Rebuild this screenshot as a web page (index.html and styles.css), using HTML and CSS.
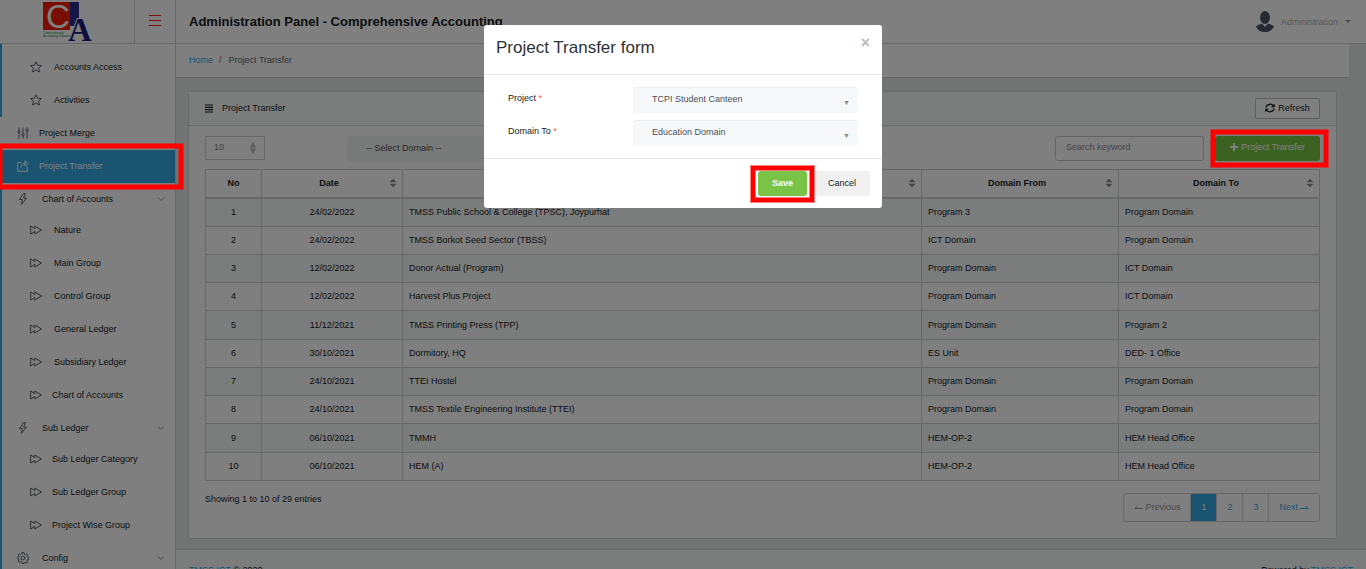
FILE: index.html
```html
<!DOCTYPE html>
<html lang="en">
<head>
<meta charset="utf-8">
<title>Project Transfer</title>
<link rel="stylesheet" href="styles.css">
</head>
<body>
<svg class="sprite" aria-hidden="true">
  <symbol id="star" viewBox="0 0 12 12"><path d="M6 .7l1.600 3.500 3.800.4-2.800 2.600.8 3.800L6 9.100 2.600 11l.8-3.800L.6 4.600l3.800-.4z"/></symbol>
  <symbol id="sliders" viewBox="0 0 12 12"><path d="M2 .5v3M2 6v5.500M6 .5v6M6 9v2.500M10 .5v1.500M10 5v6.500"/><circle cx="2" cy="4.800" r="1.200"/><circle cx="6" cy="7.800" r="1.200"/><circle cx="10" cy="3.300" r="1.200"/></symbol>
  <symbol id="share" viewBox="0 0 12 12"><path d="M4.500 2.500H.7v8.800h9.600V6.500M4 8c0-3 1.500-4.500 4.500-4.500M8 .8l3.300 2.700L8 6.200z"/></symbol>
  <symbol id="bolt" viewBox="0 0 12 12"><path d="M6.500.6L2.500 6.500h2.800L4.500 11.400l5-6.300H6.600L8.300.6z"/></symbol>
  <symbol id="forward" viewBox="0 0 12 12"><path d="M.6 2v8L4.800 7.500V10L11.500 6 4.800 2v2.500z"/></symbol>
  <symbol id="gear" viewBox="0 0 12 12"><path d="M5 .6h2l.3 1.500 1 .4 1.300-.8 1.300 1.400-.8 1.200.4 1 1 .3v1.800l-1.100.3-.4 1 .8 1.200-1.300 1.400-1.300-.8-.9.400L7 11.400H5l-.3-1.500-1-.4-1.300.8L1.100 8.900l.8-1.200-.4-1L.5 6.400V5.300l1.100-.3.4-1-.9-1.200 1.300-1.200 1.300.7 1-.3z"/><circle cx="6" cy="6" r="1.900"/></symbol>
  <symbol id="chevron" viewBox="0 0 8 8"><path d="M1 2.500l3 3 3-3"/></symbol>
  <symbol id="sort" viewBox="0 0 8 10"><path d="M.5 4.300L4 .8l3.500 3.500zM.5 5.700L4 9.200l3.500-3.500z"/></symbol>
</svg>

<header class="topbar">
  <a class="brand" href="#" aria-label="Comprehensive Accounting Software">
    <svg width="50" height="42" viewBox="0 0 50 42">
      <rect x="1" y="2" width="27" height="28" fill="#f01d08"/>
      <rect x="28" y="2" width="9" height="24" fill="#2a2a8c"/>
      <text x="4" y="28" class="logo-c">C</text>
      <text x="26" y="41" class="logo-a">A</text>
      <text x="1" y="34" class="logo-tag">Comprehensive</text>
      <text x="1" y="37" class="logo-tag">Accounting Software</text>
    </svg>
  </a>
  <button class="burger" aria-label="Toggle menu"><span></span><span></span><span></span></button>
  <h1 class="app-title">Administration Panel - Comprehensive Accounting</h1>
  <button class="account">
    <svg width="18" height="21" viewBox="0 0 18 21"><ellipse cx="9" cy="6.500" rx="5" ry="6.500"/><path d="M0 15.500c1.500-1.800 4-2 6-3l3 3.500 3-3.500c2 1 4.500 1.200 6 3-1.500 3.700-5 5.500-9 5.500s-7.500-1.800-9-5.500z"/></svg>
    Administration <span class="caret"></span>
  </button>
</header>

<div class="shell">
  <nav class="sidebar">
    <div class="group group-first">
      <a class="item sub wide" href="#"><svg class="ico"><use href="#star"/></svg>Accounts Access</a>
      <a class="item sub wide" href="#"><svg class="ico"><use href="#star"/></svg>Activities</a>
    </div>
    <a class="item top" href="#"><svg class="ico"><use href="#sliders"/></svg>Project Merge</a>
    <a class="item top active marked" href="#"><svg class="ico"><use href="#share"/></svg>Project Transfer</a>
    <div class="group">
      <a class="item head" href="#"><svg class="ico"><use href="#bolt"/></svg>Chart of Accounts<svg class="chev"><use href="#chevron"/></svg></a>
      <a class="item sub wide" href="#"><svg class="ico"><use href="#forward"/></svg>Nature</a>
      <a class="item sub wide" href="#"><svg class="ico"><use href="#forward"/></svg>Main Group</a>
      <a class="item sub wide" href="#"><svg class="ico"><use href="#forward"/></svg>Control Group</a>
      <a class="item sub wide" href="#"><svg class="ico"><use href="#forward"/></svg>General Ledger</a>
      <a class="item sub wide" href="#"><svg class="ico"><use href="#forward"/></svg>Subsidiary Ledger</a>
      <a class="item sub" href="#"><svg class="ico"><use href="#forward"/></svg>Chart of Accounts</a>
      <a class="item head" href="#"><svg class="ico"><use href="#bolt"/></svg>Sub Ledger<svg class="chev"><use href="#chevron"/></svg></a>
      <a class="item sub" href="#"><svg class="ico"><use href="#forward"/></svg>Sub Ledger Category</a>
      <a class="item sub" href="#"><svg class="ico"><use href="#forward"/></svg>Sub Ledger Group</a>
      <a class="item sub" href="#"><svg class="ico"><use href="#forward"/></svg>Project Wise Group</a>
      <a class="item head" href="#"><svg class="ico"><use href="#gear"/></svg>Config<svg class="chev"><use href="#chevron"/></svg></a>
    </div>
  </nav>

  <main class="main">
    <div class="crumbs"><a href="#">Home</a><span class="slash">/</span><span>Project Transfer</span></div>
    <section class="card">
      <div class="card-head">
        <svg width="8" height="9" viewBox="0 0 8 9"><path d="M0 1h8M0 3.300h8M0 5.700h8M0 8h8" stroke="#151b1e" stroke-width="1.200"/></svg>
        <span>Project Transfer</span>
        <button class="refresh"><svg width="10" height="10" viewBox="0 0 10 10"><path d="M1 4.500C1.500 1 6.500 0 8.500 3M9 5.500C8.500 9 3.500 10 1.500 7" fill="none" stroke="#151b1e" stroke-width="1.300"/><path d="M9.800.5v3.700H6.100zM.2 9.500V5.800h3.700z" fill="#151b1e"/></svg>Refresh</button>
      </div>
      <div class="card-body">
        <div class="tools">
          <div class="length">
            <select aria-label="Rows per page"><option>10</option></select>
            <svg width="6" height="12" viewBox="0 0 6 12"><path d="M0 5.500L3 0l3 5.500zM0 6.500L3 12l3-5.500z"/></svg>
          </div>
          <select class="soft domain" aria-label="Domain"><option>-- Select Domain --</option></select>
          <input class="search" type="text" placeholder="Search keyword" aria-label="Search keyword">
          <button class="btn green add marked"><svg width="8" height="8" viewBox="0 0 8 8"><path d="M4 0v8M0 4h8" stroke="#fff" stroke-width="2"/></svg>Project Transfer</button>
        </div>
        <table class="grid">
          <colgroup><col class="c-no"><col class="c-date"><col><col class="c-from"><col class="c-to"></colgroup>
          <thead><tr>
            <th>No</th>
            <th class="sortable">Date<svg class="sort"><use href="#sort"/></svg></th>
            <th class="sortable">Project<svg class="sort"><use href="#sort"/></svg></th>
            <th class="sortable">Domain From<svg class="sort"><use href="#sort"/></svg></th>
            <th class="sortable">Domain To<svg class="sort"><use href="#sort"/></svg></th>
          </tr></thead>
          <tbody>
            <tr><td>1</td><td>24/02/2022</td><td>TMSS Public School &amp; College (TPSC), Joypurhat</td><td>Program 3</td><td>Program Domain</td></tr>
            <tr><td>2</td><td>24/02/2022</td><td>TMSS Borkot Seed Sector (TBSS)</td><td>ICT Domain</td><td>Program Domain</td></tr>
            <tr><td>3</td><td>12/02/2022</td><td>Donor Actual (Program)</td><td>Program Domain</td><td>ICT Domain</td></tr>
            <tr><td>4</td><td>12/02/2022</td><td>Harvest Plus Project</td><td>Program Domain</td><td>ICT Domain</td></tr>
            <tr><td>5</td><td>11/12/2021</td><td>TMSS Printing Press (TPP)</td><td>Program Domain</td><td>Program 2</td></tr>
            <tr><td>6</td><td>30/10/2021</td><td>Dormitory, HQ</td><td>ES Unit</td><td>DED- 1 Office</td></tr>
            <tr><td>7</td><td>24/10/2021</td><td>TTEI Hostel</td><td>Program Domain</td><td>Program Domain</td></tr>
            <tr><td>8</td><td>24/10/2021</td><td>TMSS Textile Engineering Institute (TTEI)</td><td>Program Domain</td><td>Program Domain</td></tr>
            <tr><td>9</td><td>06/10/2021</td><td>TMMH</td><td>HEM-OP-2</td><td>HEM Head Office</td></tr>
            <tr><td>10</td><td>06/10/2021</td><td>HEM (A)</td><td>HEM-OP-2</td><td>HEM Head Office</td></tr>
          </tbody>
        </table>
        <div class="table-foot">
          <span>Showing 1 to 10 of 29 entries</span>
          <nav class="pages" aria-label="Pages">
            <a class="off" href="#"><svg width="9" height="6" viewBox="0 0 9 6"><path d="M9 4.500H1L3.500 2"/></svg>Previous</a><a class="on" href="#">1</a><a href="#">2</a><a href="#">3</a><a href="#">Next<svg width="9" height="6" viewBox="0 0 9 6"><path d="M0 4.500h8L5.500 2"/></svg></a>
          </nav>
        </div>
      </div>
    </section>
    <footer class="footer"><span><a href="#">TMSS ICT</a> © 2020</span><span>Powered by <a href="#">TMSS ICT</a></span></footer>
  </main>
</div>

<div class="backdrop">
  <form class="modal" role="dialog" aria-labelledby="modal-title">
    <div class="modal-head">
      <h2 id="modal-title">Project Transfer form</h2>
      <button type="button" class="close" aria-label="Close">×</button>
    </div>
    <div class="modal-body">
      <label for="project">Project <b>*</b></label>
      <div class="pick"><select class="soft" id="project"><option>TCPI Student Canteen</option></select><span>▼</span></div>
      <label for="domain">Domain To <b>*</b></label>
      <div class="pick"><select class="soft" id="domain"><option>Education Domain</option></select><span>▼</span></div>
    </div>
    <div class="modal-foot">
      <button type="button" class="btn green save marked">Save</button>
      <button type="button" class="btn cancel">Cancel</button>
    </div>
  </form>
</div>
</body>
</html>
```

FILE: styles.css
```css
* { box-sizing: border-box; }
body {
  margin: 0;
  height: 100vh;
  overflow: hidden;
  background: #e4e8e6;
  color: #151b1e;
  font: 9px/14px "Liberation Sans", Arial, sans-serif;
}
a { color: #36a9e1; text-decoration: none; }
button, select, input { font: inherit; color: inherit; margin: 0; }
select { appearance: none; }
.sprite { position: absolute; width: 0; height: 0; }

/* top bar */
.topbar {
  display: flex;
  align-items: center;
  height: 44px;
  background: #fff;
  border-bottom: 1px solid #cfd3d2;
}
.brand { display: flex; justify-content: center; width: 134px; height: 43px; }
.brand svg { overflow: visible; }
.logo-c { font: 33px "Liberation Sans", Arial, sans-serif; fill: #fff; }
.logo-a { font: bold 33px "Liberation Serif", serif; fill: #1b1b80; stroke: #fff; stroke-width: 2px; paint-order: stroke; }
.logo-tag { font: 3px "Liberation Sans", Arial, sans-serif; fill: #178a3a; }
.burger {
  display: flex;
  flex-direction: column;
  justify-content: center;
  align-items: center;
  gap: 4px;
  width: 42px;
  height: 43px;
  padding: 0 0 2px;
  background: none;
  border: solid #cfd3d2;
  border-width: 0 1px;
}
.burger span { width: 12px; height: 1px; background: #ff2a10; }
.app-title { margin: 0 auto 0 13px; font-size: 13px; line-height: 20px; }
.account {
  display: flex;
  align-items: center;
  gap: 7px;
  padding: 0;
  margin-right: 15px;
  background: none;
  border: 0;
  color: #b0b0b0;
}
.account svg { fill: #4c5565; }
.caret { border: 3px solid transparent; border-top-color: #999; border-bottom: 0; }

/* layout */
.shell { display: flex; }
.sidebar { flex: 0 0 176px; background: #fff; border-right: 1px solid #cfd3d2; }
.main { flex: 1; min-width: 0; }

/* sidebar */
.group { border-left: 2px solid #36a9e1; }
.group-first { padding-top: 7px; }
.item { display: flex; align-items: center; height: 33px; padding-bottom: 2px; color: #151b1e; }
.top { padding-left: 17px; gap: 10px; }
.head { height: 31px; padding: 0 10px 0 15px; gap: 13px; }
.sub { padding-left: 28px; gap: 10px; }
.wide { gap: 12px; }
.ico { width: 12px; height: 12px; fill: none; stroke: #5a6368; stroke-width: 1; }
.chev { width: 8px; height: 8px; margin-left: auto; fill: none; stroke: #8a9296; }
.active { position: relative; margin-left: 2px; padding-left: 15px; background: #36a9e1; color: #fff; }
.active .ico { stroke: #fff; }

/* highlight frames around the steps */
.marked { position: relative; }
.marked::after {
  content: "";
  position: absolute;
  z-index: 20;
  inset: -6px -8px -6px -4px;
  border: 4px solid #f00;
  box-shadow: 0 0 0 1px rgba(255, 0, 0, .5), inset 0 0 0 1px rgba(255, 0, 0, .5);
}
.active.marked::after { right: -8px; left: -4px; }
.save.marked::after { inset: -5px -7px -6px -7px; }

/* breadcrumb */
.crumbs {
  height: 34px;
  margin-right: 17px;
  padding: 9px 13px;
  background: #fff;
  border-bottom: 1px solid #cfd3d2;
  color: #5c6468;
}
.slash { margin: 0 7px 0 6px; }

/* card */
.card { margin: 13px 29px 10px 12px; background: #fff; border: 1px solid #cfd3d2; border-radius: 3px; }
.card-head {
  display: flex;
  align-items: center;
  gap: 9px;
  height: 34px;
  padding: 0 16px 1px;
  background: #f6f9f8;
  border-bottom: 1px solid #cfd3d2;
}
.refresh {
  display: flex;
  align-items: center;
  justify-content: center;
  gap: 3px;
  width: 65px;
  height: 21px;
  margin-left: auto;
  padding: 0 0 1px;
  background: #fff;
  border: 1px solid #bcc1c0;
  border-radius: 2px;
}
.card-body { padding: 10px 16px 16px; }
.tools { display: flex; align-items: flex-start; margin-bottom: 7px; }
.length { position: relative; width: 60px; }
.length select { width: 100%; height: 24px; padding: 0 8px 2px; background: #fff; border: 1px solid #cfd3d2; border-radius: 0; color: #7b8387; }
.length svg { position: absolute; right: 9px; top: 6px; fill: #bbb; }
.soft { width: 225px; height: 26px; padding: 0 19px 4px; background: #f7f8fa; border: 0; border-top: 1px solid #eceef0; border-radius: 3px; color: #495055; }
.domain { margin: 0 auto 0 82px; background: #f0f3f2; }
.search { width: 149px; height: 25px; margin-right: 11px; padding: 0 10px 3px; background: #fff; border: 1px solid #c5cac9; border-radius: 3px; }
.search::placeholder { color: #868e92; opacity: 1; }
.btn { height: 25px; padding: 0 0 2px; border: 0; border-radius: 3px; }
.green { background: #79c447; color: #fff; }
.add { display: flex; align-items: center; justify-content: center; gap: 3px; width: 105px; padding-bottom: 3px; }
.save { width: 49px; font-weight: bold; }
.cancel { width: 56px; background: #f0f0f0; }

/* table */
.grid { width: 100%; table-layout: fixed; border-collapse: collapse; }
.c-no { width: 56px; }
.c-date { width: 141px; }
.c-from { width: 197px; }
.c-to { width: 201px; }
.grid th, .grid td { height: 28px; padding: 0 6px 1px; border: 1px solid #cfd3d2; text-align: left; }
.grid th { position: relative; padding-bottom: 0; text-align: center; border-bottom-width: 2px; }
.grid .sortable { padding-right: 12px; }
.grid td:nth-child(-n+2) { text-align: center; }
.grid tbody tr:nth-child(odd) { background: #f6f9f8; }
.grid tbody tr:nth-child(4n+1) td { height: 29px; }
.sort { position: absolute; right: 5px; top: 8px; width: 8px; height: 10px; fill: #858d90; }
.table-foot { display: flex; justify-content: space-between; align-items: flex-start; line-height: 12px; margin-top: 12px; }
.pages { display: flex; border: 1px solid #cfd3d2; border-radius: 3px; }
.pages a { display: flex; align-items: center; gap: 2px; height: 27px; padding: 0 10px 1px; border-left: 1px solid #cfd3d2; }
.pages a:first-child { border-left: 0; }
.pages svg { fill: none; stroke: currentColor; }
.pages .off { color: #8b9397; }
.pages .on { background: #36a9e1; color: #fff; }

/* footer */
.footer { display: flex; justify-content: space-between; padding: 13px 13px; background: #f6f9f8; border-top: 1px solid #cfd3d2; }

/* dialog */
.backdrop {
  position: fixed;
  z-index: 10;
  inset: 0;
  display: flex;
  justify-content: center;
  align-items: flex-start;
  padding-top: 25px;
  background: rgba(0, 0, 0, .5);
}
.modal { width: 398px; background: #fff; border-radius: 3px; }
.modal-head { display: flex; justify-content: space-between; height: 50px; padding: 12px; border-bottom: 1px solid #e4e5e6; }
.modal h2 { margin: 0; font-size: 17px; line-height: 22px; font-weight: normal; color: #2b3236; }
.close { height: 12px; padding: 0; background: none; border: 0; color: #bbb; font-size: 16px; line-height: 10px; font-weight: bold; }
.modal-body {
  display: grid;
  grid-template-columns: 125px 225px;
  row-gap: 7px;
  padding: 12px 24px;
}
.modal-body label { padding-top: 4px; }
.modal-body b { color: #ff5430; font-weight: normal; }
.pick { position: relative; }
.pick .soft { display: block; }
.pick span { position: absolute; right: 8px; top: 10px; font-size: 7px; line-height: 12px; color: #888; }
.modal-foot { display: flex; justify-content: flex-end; gap: 7px; padding: 12px; border-top: 1px solid #e4e5e6; }
```
